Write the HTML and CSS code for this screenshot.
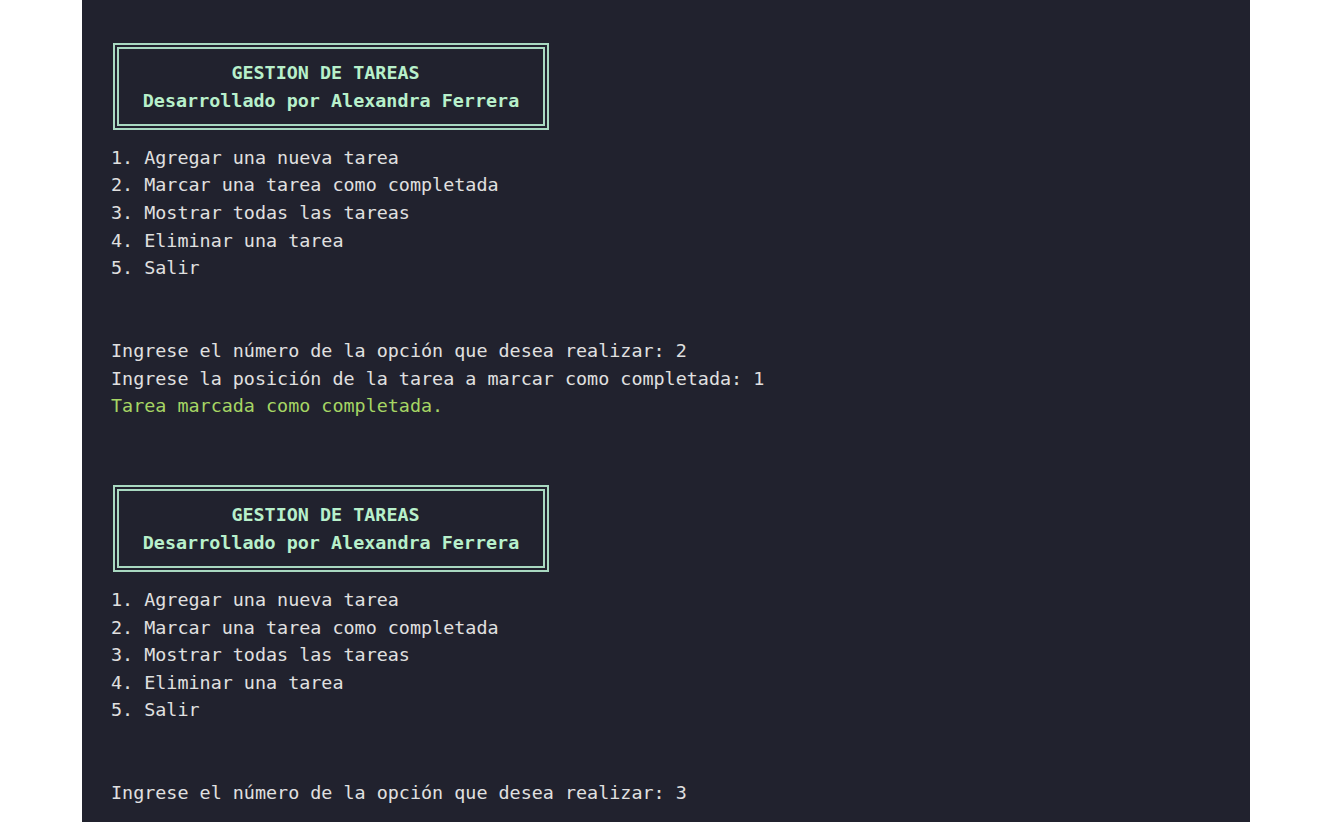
FILE: index.html
```html
<!DOCTYPE html>
<html lang="es">
<head>
<meta charset="utf-8">
<title>Gestion de tareas</title>
<link rel="stylesheet" href="styles.css">
</head>
<body>
<main class="terminal">
  <section class="cycle">
    <div class="banner">
      <div class="banner-box">
        <div class="line title">GESTION DE TAREAS</div>
        <div class="line">Desarrollado por Alexandra Ferrera</div>
      </div>
    </div>
    <div class="line">1. Agregar una nueva tarea</div>
    <div class="line">2. Marcar una tarea como completada</div>
    <div class="line">3. Mostrar todas las tareas</div>
    <div class="line">4. Eliminar una tarea</div>
    <div class="line">5. Salir</div>
    <div class="line empty"></div>
    <div class="line empty"></div>
    <div class="line">Ingrese el número de la opción que desea realizar: 2</div>
    <div class="line">Ingrese la posición de la tarea a marcar como completada: 1</div>
    <div class="line success">Tarea marcada como completada.</div>
    <div class="line empty"></div>
    <div class="line empty"></div>
  </section>
  <section class="cycle">
    <div class="banner">
      <div class="banner-box">
        <div class="line title">GESTION DE TAREAS</div>
        <div class="line">Desarrollado por Alexandra Ferrera</div>
      </div>
    </div>
    <div class="line">1. Agregar una nueva tarea</div>
    <div class="line">2. Marcar una tarea como completada</div>
    <div class="line">3. Mostrar todas las tareas</div>
    <div class="line">4. Eliminar una tarea</div>
    <div class="line">5. Salir</div>
    <div class="line empty"></div>
    <div class="line empty"></div>
    <div class="line">Ingrese el número de la opción que desea realizar: 3</div>
  </section>
</main>
</body>
</html>
```
FILE: styles.css
```css
html, body {
  margin: 0;
  padding: 0;
  background: #ffffff;
  height: 100%;
  overflow: hidden;
}

.terminal {
  margin-left: 82px;
  width: 1168px;
  height: 822px;
  box-sizing: border-box;
  background: #21222e;
  padding: 33px 0 0 29px;
  color: #e0e0e0;
  font-family: "DejaVu Sans Mono", monospace;
  font-size: 18.4px;
  overflow: hidden;
}

.line {
  height: 27.65px;
  line-height: 27.65px;
  white-space: pre;
}

.success {
  color: #a6d564;
}

.banner {
  height: 110.6px;
  box-sizing: border-box;
  padding-top: 10px;
}

.banner-box {
  width: 436px;
  margin-left: 2px;
  height: 87px;
  box-sizing: border-box;
  border: 6px double #a9d9c1;
  padding-top: 10px;
  text-align: center;
  color: #b8f0cb;
  font-weight: bold;
}

.title {
  padding-right: 11px;
}
```
